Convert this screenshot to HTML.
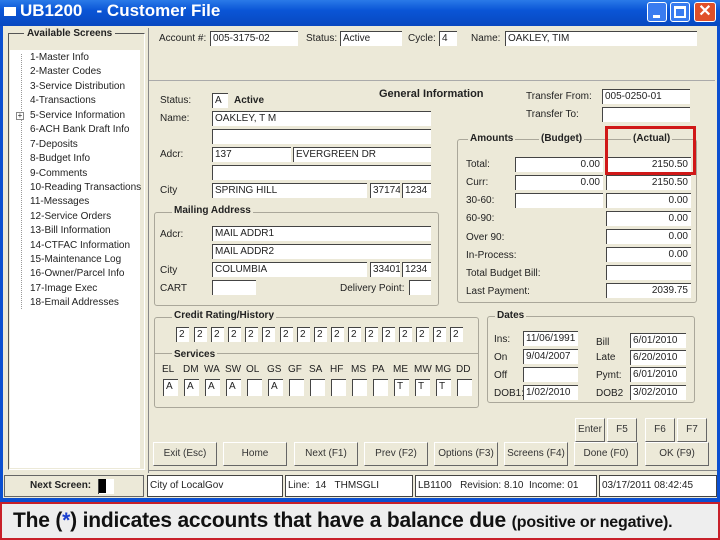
<!DOCTYPE html><html><head><style>
*{margin:0;padding:0;box-sizing:border-box}
body{width:720px;height:540px;overflow:hidden;background:#0b4fd0;font-family:"Liberation Sans",sans-serif;font-size:10px;color:#222;position:relative}
.a{position:absolute}
.in{position:absolute;background:#fff;border-top:1px solid #444;border-left:1px solid #444;height:15px;line-height:13px;padding-left:2px;font-size:10px;white-space:nowrap;overflow:hidden}
.r{text-align:right;padding-right:3px}
.l{position:absolute;font-size:10px;white-space:nowrap;color:#222}
.b{font-weight:bold}
.grp{position:absolute;border:1px solid #aaa79a;border-radius:3px}
.gt{position:absolute;background:#ece9d8;font-weight:bold;font-size:10px;padding:0 2px;top:-7px}
.btn{position:absolute;background:#ece9d8;border:1px solid #fff;border-right:1px solid #666;border-bottom:1px solid #666;font-size:10px;text-align:center;line-height:22px;height:24px;color:#333}
.li{position:absolute;left:30px;font-size:10px;white-space:nowrap}
</style></head><body>
<div class="a" style="left:0;top:0;width:720px;height:26px;background:linear-gradient(#2a7ae8,#0a55d6 40%,#0848c0)"></div>
<div class="a" style="left:4px;top:7px;width:12px;height:9px;background:#fff"></div>
<div class="a" style="left:20px;top:1px;color:#fff;font-weight:bold;font-size:17px">UB1200 &nbsp; - Customer File</div>
<div class="a" style="left:647px;top:2px;width:20px;height:20px;background:#3a7cf0;border:1px solid #fff;border-radius:3px"><div class="a" style="left:5px;top:12px;width:7px;height:3px;background:#fff"></div></div>
<div class="a" style="left:670px;top:2px;width:20px;height:20px;background:#3a7cf0;border:1px solid #fff;border-radius:3px"><div class="a" style="left:3px;top:3px;width:12px;height:12px;border:2px solid #fff;border-top-width:3px"></div></div>
<div class="a" style="left:694px;top:2px;width:22px;height:20px;background:#e0502a;border:1px solid #fff;border-radius:3px;color:#fff;font-weight:bold;font-size:16px;text-align:center;line-height:18px">✕</div>
<div class="a" style="left:3px;top:26px;width:714px;height:472px;background:#ece9d8"></div>
<div class="a" style="left:8px;top:33px;width:137px;height:437px;border:1px solid #555;border-right-color:#fff;border-bottom-color:#fff"></div>
<div class="a" style="left:10px;top:50px;width:130px;height:418px;background:#fff"></div>
<div class="a" style="left:24px;top:28px;background:#ece9d8;font-weight:bold;font-size:10px;padding:0 3px">Available Screens</div>
<div class="a" style="left:21px;top:54px;height:255px;border-left:1px dotted #999"></div>
<div class="li" style="top:52px">1-Master Info</div><div class="li" style="top:66px">2-Master Codes</div><div class="li" style="top:81px">3-Service Distribution</div><div class="li" style="top:95px">4-Transactions</div><div class="li" style="top:110px">5-Service Information</div><div class="li" style="top:124px">6-ACH Bank Draft Info</div><div class="li" style="top:139px">7-Deposits</div><div class="li" style="top:153px">8-Budget Info</div><div class="li" style="top:168px">9-Comments</div><div class="li" style="top:182px">10-Reading Transactions</div><div class="li" style="top:196px">11-Messages</div><div class="li" style="top:211px">12-Service Orders</div><div class="li" style="top:225px">13-Bill Information</div><div class="li" style="top:240px">14-CTFAC Information</div><div class="li" style="top:254px">15-Maintenance Log</div><div class="li" style="top:268px">16-Owner/Parcel Info</div><div class="li" style="top:283px">17-Image Exec</div><div class="li" style="top:297px">18-Email Addresses</div>
<div class="a" style="left:16px;top:112px;width:8px;height:8px;border:1px solid #888;background:#fff;font-size:8px;line-height:6px;text-align:center">+</div>
<div class="a" style="left:148px;top:28px;width:1px;height:445px;background:#888"></div>
<div class="a" style="left:149px;top:80px;width:566px;height:1px;background:#aaa"></div>
<div class="l" style="left:159px;top:33px">Account #:</div><div class="in" style="left:210px;top:31px;width:88px">005-3175-02</div>
<div class="l" style="left:306px;top:33px">Status:</div><div class="in" style="left:340px;top:31px;width:62px">Active</div>
<div class="l" style="left:408px;top:33px">Cycle:</div><div class="in" style="left:439px;top:31px;width:18px">4</div>
<div class="l" style="left:471px;top:33px">Name:</div><div class="in" style="left:505px;top:31px;width:192px">OAKLEY, TIM</div>
<div class="l b" style="left:379px;top:88px;font-size:11px">General Information</div>
<div class="l" style="left:160px;top:95px">Status:</div><div class="in" style="left:212px;top:93px;width:16px">A</div><div class="l b" style="left:234px;top:95px">Active</div>
<div class="l" style="left:160px;top:113px">Name:</div><div class="in" style="left:212px;top:111px;width:219px">OAKLEY, T M</div>
<div class="in" style="left:212px;top:129px;width:219px"></div>
<div class="l" style="left:160px;top:149px">Adcr:</div><div class="in" style="left:212px;top:147px;width:79px">137</div><div class="in" style="left:293px;top:147px;width:138px">EVERGREEN DR</div>
<div class="in" style="left:212px;top:165px;width:219px"></div>
<div class="l" style="left:160px;top:185px">City</div><div class="in" style="left:212px;top:183px;width:155px">SPRING HILL</div><div class="in" style="left:370px;top:183px;width:30px">37174</div><div class="in" style="left:402px;top:183px;width:29px">1234</div>
<div class="l" style="left:526px;top:91px">Transfer From:</div><div class="in" style="left:602px;top:89px;width:88px">005-0250-01</div>
<div class="l" style="left:526px;top:109px">Transfer To:</div><div class="in" style="left:602px;top:107px;width:88px"></div>
<div class="grp" style="left:457px;top:139px;width:240px;height:164px"></div>
<div class="l b" style="left:468px;top:133px;background:#ece9d8;padding:0 2px">Amounts</div><div class="l b" style="left:539px;top:133px;background:#ece9d8;padding:0 2px">(Budget)</div><div class="l b" style="left:631px;top:133px;background:#ece9d8;padding:0 2px">(Actual)</div>
<div class="l" style="left:466px;top:159px">Total:</div><div class="in r" style="left:515px;top:157px;width:88px">0.00</div><div class="in r" style="left:606px;top:157px;width:85px">2150.50</div>
<div class="l" style="left:466px;top:177px">Curr:</div><div class="in r" style="left:515px;top:175px;width:88px">0.00</div><div class="in r" style="left:606px;top:175px;width:85px">2150.50</div>
<div class="l" style="left:466px;top:195px">30-60:</div><div class="in" style="left:515px;top:193px;width:88px"></div><div class="in r" style="left:606px;top:193px;width:85px">0.00</div>
<div class="l" style="left:466px;top:213px">60-90:</div><div class="in r" style="left:606px;top:211px;width:85px">0.00</div>
<div class="l" style="left:466px;top:232px">Over 90:</div><div class="in r" style="left:606px;top:229px;width:85px">0.00</div>
<div class="l" style="left:466px;top:250px">In-Process:</div><div class="in r" style="left:606px;top:247px;width:85px">0.00</div>
<div class="l" style="left:466px;top:268px">Total Budget Bill:</div><div class="in" style="left:606px;top:265px;width:85px"></div>
<div class="l" style="left:466px;top:286px">Last Payment:</div><div class="in r" style="left:606px;top:283px;width:85px">2039.75</div>
<div class="a" style="left:605px;top:126px;width:91px;height:49px;border:3px solid #d01818"></div>
<div class="grp" style="left:154px;top:212px;width:285px;height:94px"></div><div class="gt" style="left:172px;top:205px">Mailing Address</div>
<div class="l" style="left:160px;top:229px">Adcr:</div><div class="in" style="left:212px;top:226px;width:219px">MAIL ADDR1</div>
<div class="in" style="left:212px;top:244px;width:219px">MAIL ADDR2</div>
<div class="l" style="left:160px;top:265px">City</div><div class="in" style="left:212px;top:262px;width:155px">COLUMBIA</div><div class="in" style="left:370px;top:262px;width:30px">33401</div><div class="in" style="left:402px;top:262px;width:29px">1234</div>
<div class="l" style="left:160px;top:283px">CART</div><div class="in" style="left:212px;top:280px;width:44px"></div><div class="l" style="left:340px;top:283px">Delivery Point:</div><div class="in" style="left:409px;top:280px;width:22px"></div>
<div class="grp" style="left:154px;top:317px;width:325px;height:91px"></div><div class="gt" style="left:172px;top:310px">Credit Rating/History</div>
<div class="a" style="left:155px;top:353px;width:323px;height:1px;background:#aaa79a"></div><div class="gt" style="left:172px;top:349px">Services</div>
<div id="cr"></div>
<div class="grp" style="left:487px;top:316px;width:208px;height:87px"></div><div class="gt" style="left:495px;top:310px">Dates</div>
<div class="l" style="left:494px;top:334px">Ins:</div><div class="in" style="left:523px;top:331px;width:55px">11/06/1991</div>
<div class="l" style="left:494px;top:352px">On</div><div class="in" style="left:523px;top:349px;width:55px">9/04/2007</div>
<div class="l" style="left:494px;top:370px">Off</div><div class="in" style="left:523px;top:367px;width:55px"></div>
<div class="l" style="left:494px;top:388px">DOB1:</div><div class="in" style="left:523px;top:385px;width:55px">1/02/2010</div>
<div class="l" style="left:596px;top:337px">Bill</div><div class="in" style="left:630px;top:333px;width:56px">6/01/2010</div>
<div class="l" style="left:596px;top:352px">Late</div><div class="in" style="left:630px;top:350px;width:56px">6/20/2010</div>
<div class="l" style="left:596px;top:370px">Pymt:</div><div class="in" style="left:630px;top:367px;width:56px">6/01/2010</div>
<div class="l" style="left:596px;top:388px">DOB2</div><div class="in" style="left:630px;top:385px;width:56px">3/02/2010</div>
<div class="btn" style="left:575px;top:418px;width:30px">Enter</div><div class="btn" style="left:607px;top:418px;width:30px">F5</div><div class="btn" style="left:645px;top:418px;width:30px">F6</div><div class="btn" style="left:677px;top:418px;width:30px">F7</div>
<div class="btn" style="left:153px;top:442px;width:64px">Exit (Esc)</div><div class="btn" style="left:223px;top:442px;width:64px">Home</div><div class="btn" style="left:294px;top:442px;width:64px">Next (F1)</div><div class="btn" style="left:364px;top:442px;width:64px">Prev (F2)</div><div class="btn" style="left:434px;top:442px;width:64px">Options (F3)</div><div class="btn" style="left:504px;top:442px;width:64px">Screens (F4)</div><div class="btn" style="left:574px;top:442px;width:64px">Done (F0)</div><div class="btn" style="left:645px;top:442px;width:64px">OK (F9)</div>
<div class="a" style="left:148px;top:470px;width:569px;height:1px;background:#888"></div>
<div class="a" style="left:4px;top:475px;width:140px;height:22px;border:1px solid #666;background:#ece9d8"></div><div class="l b" style="left:30px;top:480px">Next Screen:</div><div class="a" style="left:98px;top:479px;width:16px;height:15px;background:#fff;border-left:1px solid #444"><div class="a" style="left:0;top:0;width:7px;height:14px;background:#000"></div></div>
<div class="in" style="left:147px;top:475px;width:136px;height:22px;line-height:20px;border:1px solid #444">City of LocalGov</div>
<div class="in" style="left:285px;top:475px;width:128px;height:22px;line-height:20px;border:1px solid #444">Line: &nbsp;14 &nbsp; THMSGLI</div>
<div class="in" style="left:415px;top:475px;width:182px;height:22px;line-height:20px;border:1px solid #444">LB1100 &nbsp; Revision: 8.10 &nbsp;Income: 01</div>
<div class="in" style="left:599px;top:475px;width:118px;height:22px;line-height:20px;border:1px solid #444">03/17/2011 08:42:45</div>
<div class="a" style="left:0;top:502px;width:720px;height:38px;background:#eeeeee;border:2px solid #c8202a"></div>
<div class="a" style="left:13px;top:509px;font-size:21px;font-weight:bold;color:#111;white-space:nowrap;font-family:'Liberation Sans',sans-serif;letter-spacing:-0.2px">The (<span style="color:#1a3fd0">*</span>) indicates accounts that have a balance due <span style="font-size:16px">(positive or negative).</span></div>
<script>
var h='',xs=[176,194,211,228,245,262,280,297,314,331,348,365,382,399,416,433,450];
xs.forEach(function(x,i){h+='<div class="in" style="left:'+x+'px;top:327px;width:13px">2</div>'});
var s=['EL','DM','WA','SW','OL','GS','GF','SA','HF','MS','PA','ME','MW','MG','DD'],v=['A','A','A','A','','A','','','','','','T','T','T',''];
s.forEach(function(t,i){var x=162+i*21;h+='<div class="l" style="left:'+x+'px;top:364px">'+t+'</div><div class="in" style="left:'+(x+1)+'px;top:379px;width:15px;height:17px">'+v[i]+'</div>'});
document.getElementById('cr').innerHTML=h;
</script>
</body></html>
